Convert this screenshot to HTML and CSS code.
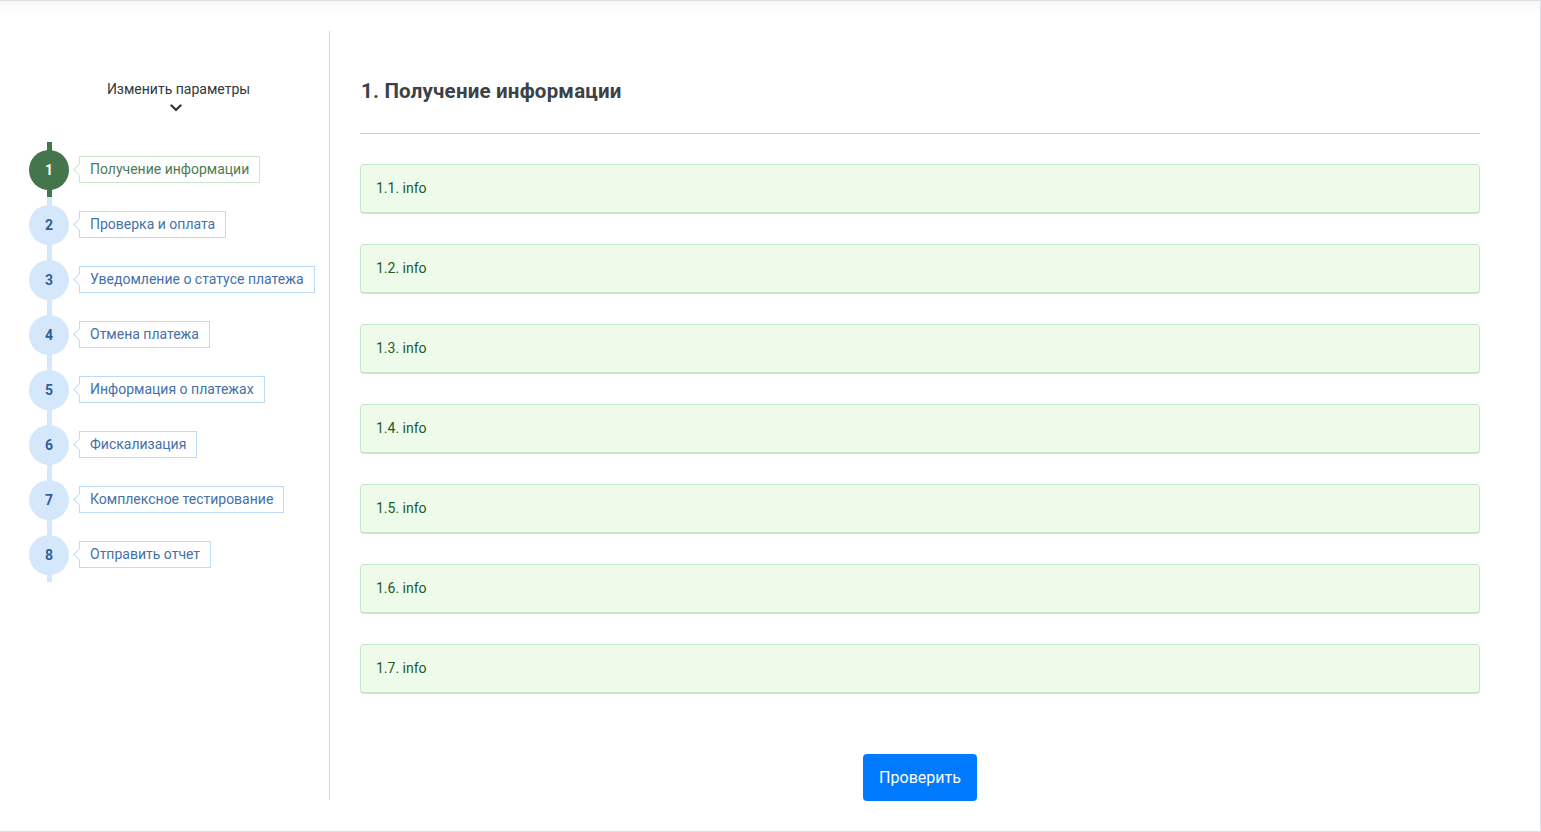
FILE: index.html
```html
<!DOCTYPE html>
<html lang="ru">
<head>
<meta charset="utf-8">
<title>Получение информации</title>
<link rel="stylesheet" href="styles.css">
</head>
<body>
<div class="page">
  <div class="layout">
    <aside class="sidebar">
      <div class="params">
        <div class="params-title">Изменить параметры</div>
        <svg class="chevron" width="12" height="8" viewBox="0 0 12 8"><path d="M1.5 1.5 L6 6 L10.5 1.5" fill="none" stroke="#3a3f45" stroke-width="2.4" stroke-linecap="round" stroke-linejoin="round"/></svg>
      </div>
      <ol class="steps">
        <li class="step active"><span class="num">1</span><span class="label">Получение информации</span></li>
        <li class="step"><span class="num">2</span><span class="label">Проверка и оплата</span></li>
        <li class="step"><span class="num">3</span><span class="label">Уведомление о статусе платежа</span></li>
        <li class="step"><span class="num">4</span><span class="label">Отмена платежа</span></li>
        <li class="step"><span class="num">5</span><span class="label">Информация о платежах</span></li>
        <li class="step"><span class="num">6</span><span class="label">Фискализация</span></li>
        <li class="step"><span class="num">7</span><span class="label">Комплексное тестирование</span></li>
        <li class="step"><span class="num">8</span><span class="label">Отправить отчет</span></li>
      </ol>
    </aside>
    <main class="content">
      <h1 class="title">1. Получение информации</h1>
      <hr class="divider">
      <div class="cards">
        <div class="card">1.1. info</div>
        <div class="card">1.2. info</div>
        <div class="card">1.3. info</div>
        <div class="card">1.4. info</div>
        <div class="card">1.5. info</div>
        <div class="card">1.6. info</div>
        <div class="card">1.7. info</div>
      </div>
      <div class="actions">
        <button class="btn" type="button">Проверить</button>
      </div>
    </main>
  </div>
</div>
</body>
</html>
```

FILE: styles.css
```css
* { box-sizing: border-box; }
html, body { margin: 0; padding: 0; }
body {
  font-family: Roboto, "Liberation Sans", Arial, sans-serif;
  color: #333;
  background: #fff;
}
.page {
  width: 1541px;
  height: 832px;
  border-top: 1px solid #dde0e4;
  border-right: 1px solid #dde0e4;
  border-bottom: 1px solid #dde0e4;
  background: linear-gradient(#f8f8f8, #ffffff 14px);
  padding: 30px 60px 30px 0;
}
.layout {
  display: flex;
  height: 769px;
}
.sidebar {
  width: 330px;
  flex: none;
  border-right: 1px solid #d6d6d6;
  padding-left: 29px;
  padding-right: 1px;
}
.params {
  display: flex;
  flex-direction: column;
  align-items: center;
  padding-top: 48px;
}
.params-title {
  font-size: 14px;
  line-height: 20px;
  color: #33373c;
}
.chevron {
  display: block;
  margin-top: 5px;
  margin-right: 6px;
}
.steps {
  list-style: none;
  margin: 30px 0 0;
  padding: 0;
}
.step {
  position: relative;
  height: 55px;
  display: flex;
  align-items: center;
}
.step::before {
  content: "";
  position: absolute;
  left: 18px;
  top: 0;
  bottom: 0;
  width: 5px;
  background: #d5e8fb;
}
.step.active::before { background: #44754d; }
.num {
  position: relative;
  width: 40px;
  height: 40px;
  border-radius: 50%;
  background: #d5e8fb;
  color: #2f5f99;
  font-weight: 700;
  font-size: 14px;
  line-height: 38px;
  display: flex;
  align-items: center;
  justify-content: center;
  flex: none;
}
.step.active .num {
  background: #44754d;
  color: #fff;
}
.label {
  position: relative;
  margin-left: 10px;
  height: 27px;
  line-height: 25px;
  padding: 0 10px;
  font-size: 14px;
  color: #4571a8;
  border: 1px solid #bcdaf9;
  background: #fff;
  white-space: nowrap;
}
.label::before {
  content: "";
  position: absolute;
  left: -5px;
  top: 8px;
  width: 8px;
  height: 8px;
  background: #fff;
  border-left: 1px solid #bcdaf9;
  border-bottom: 1px solid #bcdaf9;
  transform: rotate(45deg);
}
.step.active .label {
  color: #4b7c55;
  border-color: #cae8d0;
}
.step.active .label::before { border-color: #cae8d0; }

.content {
  flex: 1;
  padding-left: 30px;
  display: flex;
  flex-direction: column;
}
.title {
  margin: 48px 0 0 1px;
  font-size: 20.5px;
  line-height: 24px;
  font-weight: 700;
  letter-spacing: 0.2px;
  color: #3c4147;
}
.divider {
  margin: 30px 0 0;
  border: 0;
  border-top: 1px solid #cfcfcf;
  height: 0;
}
.cards {
  margin-top: 30px;
  display: flex;
  flex-direction: column;
  gap: 30px;
}
.card {
  height: 50px;
  border: 1px solid #c6e8cd;
  border-bottom-width: 2px;
  border-radius: 4px;
  background: #effbea;
  color: #1d5a2b;
  font-size: 14px;
  line-height: 20px;
  padding: 13px 15px;
}
.actions {
  margin-top: 60px;
  display: flex;
  justify-content: center;
}
.btn {
  font-family: Roboto, "Liberation Sans", Arial, sans-serif;
  font-size: 16px;
  line-height: 21px;
  height: 47px;
  padding: 0 16px;
  color: #fff;
  background: #007bff;
  border: 0;
  border-radius: 4px;
}
```
